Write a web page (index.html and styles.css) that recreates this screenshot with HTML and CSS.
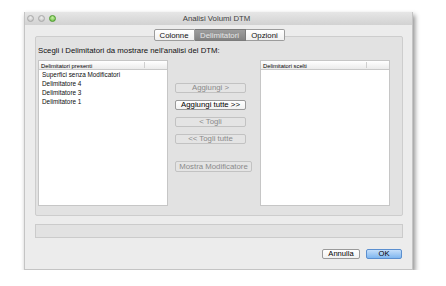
FILE: index.html
```html
<!DOCTYPE html>
<html lang="it">
<head>
    <meta charset="UTF-8">
    <meta name="viewport" content="width=device-width, initial-scale=1.0">
    <title>Analisi Volumi DTM</title>
    <link rel="stylesheet" href="styles.css">
</head>
<body>
    <div class="window">
        <div class="titlebar">
            <div class="lights">
                <span class="light"></span>
                <span class="light"></span>
                <span class="light green"></span>
            </div>
            <div class="title">Analisi Volumi DTM</div>
        </div>

        <div class="content">
            <div class="tabs">
                <span class="tab first">Colonne</span>
                <span class="tab selected">Delimitatori</span>
                <span class="tab last">Opzioni</span>
            </div>

            <div class="tab-box">
                <div class="label">Scegli i Delimitatori da mostrare nell'analisi del DTM:</div>

                <div class="pickers">
                    <div class="list">
                        <div class="list-header"><span class="col-main">Delimitatori presenti</span><span class="col-rest"></span></div>
                        <div class="list-item">Superfici senza Modificatori</div>
                        <div class="list-item">Delimitatore 4</div>
                        <div class="list-item">Delimitatore 3</div>
                        <div class="list-item">Delimitatore 1</div>
                    </div>

                    <div class="actions">
                        <button class="btn disabled">Aggiungi &gt;</button>
                        <button class="btn">Aggiungi tutte &gt;&gt;</button>
                        <button class="btn disabled">&lt; Togli</button>
                        <button class="btn disabled">&lt;&lt; Togli tutte</button>
                        <button class="btn disabled wide">Mostra Modificatore</button>
                    </div>

                    <div class="list">
                        <div class="list-header"><span class="col-main">Delimitatori scelti</span><span class="col-rest"></span></div>
                    </div>
                </div>
            </div>

            <div class="progress"></div>

            <div class="footer">
                <button class="btn-footer">Annulla</button>
                <button class="btn-footer default">OK</button>
            </div>
        </div>
    </div>
</body>
</html>
```

FILE: styles.css
```css
body {
    margin: 0;
    background: #ffffff;
    font-family: 'Liberation Sans', Arial, sans-serif;
    font-size: 7.8px;
    color: #000000;
}

.window {
    margin: 12px 0 0 24px;
    width: 389px;
    height: 258px;
    box-sizing: border-box;
    background: #ececec;
    border: 1px solid #c4c4c4;
    border-top: none;
    box-shadow: 2px 3px 5px rgba(0, 0, 0, 0.45);
}

.titlebar {
    position: relative;
    height: 13px;
    background: linear-gradient(#e6e6e6, #d2d2d2);
    display: flex;
    align-items: center;
}

.lights {
    display: flex;
    gap: 4px;
    padding-left: 2px;
}

.light {
    width: 7px;
    height: 7px;
    border-radius: 50%;
    box-sizing: border-box;
    background: radial-gradient(circle at 50% 35%, #eeeeee, #bdbdbd);
    border: 1px solid #a9a9a9;
}

.light.green {
    background: radial-gradient(circle at 50% 35%, #c8f0a4, #5fb83a);
    border-color: #4c9a2c;
}

.title {
    position: absolute;
    left: 0;
    right: 0;
    top: 0;
    line-height: 13px;
    text-align: center;
    color: #3f3f3f;
    padding-right: 4px;
}

.content {
    padding: 0 9px 0 10px;
}

.tabs {
    display: flex;
    justify-content: center;
    margin-top: 4px;
    margin-bottom: -5px;
    position: relative;
    z-index: 1;
}

.tab {
    height: 12px;
    line-height: 11px;
    box-sizing: border-box;
    padding: 0 5px;
    background: linear-gradient(#ffffff, #f0f0f0);
    border: 1px solid #9c9c9c;
    border-left: none;
    color: #111111;
}

.tab.first {
    border-left: 1px solid #9c9c9c;
    border-radius: 2px 0 0 2px;
    width: 41px;
    text-align: center;
}

.tab.selected {
    background: linear-gradient(#9d9d9d, #838383);
    color: #e6e6e6;
    border-color: #7b7b7b;
    width: 51px;
    text-align: center;
}

.tab.last {
    border-radius: 0 2px 2px 0;
    width: 39px;
    text-align: center;
}

.tab-box {
    height: 180px;
    box-sizing: border-box;
    background: #e2e2e2;
    border: 1px solid #cdcdcd;
    border-radius: 2px;
    padding: 9px 12px 0 2px;
}

.label {
    line-height: 10px;
    color: #111111;
}

.pickers {
    display: flex;
    margin-top: 4px;
}

.list {
    width: 130px;
    height: 146px;
    box-sizing: border-box;
    background: #ffffff;
    border: 1px solid #c6c6c6;
}

.list-header {
    display: flex;
    height: 9px;
    box-sizing: border-box;
    background: linear-gradient(#ffffff, #ebebeb);
    border-bottom: 1px solid #c9c9c9;
    font-size: 5.8px;
    line-height: 8px;
}

.col-main {
    width: 106px;
    padding-left: 2px;
    box-sizing: border-box;
    border-right: 1px solid #cfcfcf;
    margin: 1px 0;
}

.list-item {
    height: 9px;
    line-height: 9px;
    padding-left: 3px;
    font-size: 6.4px;
    color: #0d0d0d;
}

.actions {
    width: 77px;
    margin: 23px 8px 0 7px;
    display: flex;
    flex-direction: column;
    align-items: flex-start;
    gap: 7px;
}

.btn {
    width: 71px;
    height: 10px;
    padding: 0;
    box-sizing: border-box;
    font-family: inherit;
    font-size: 7.8px;
    line-height: 8px;
    background: linear-gradient(#ffffff, #f2f2f2);
    border: 1px solid #9a9a9a;
    border-radius: 2px;
    color: #000000;
}

.btn.disabled {
    background: #e4e4e4;
    border-color: #c2c2c2;
    color: #8a8a8a;
}

.btn.wide {
    width: 77px;
    height: 11px;
    margin-top: 10px;
}

.progress {
    margin-top: 8px;
    height: 14px;
    box-sizing: border-box;
    background: #e2e2e2;
    border: 1px solid #cbcbcb;
}

.footer {
    display: flex;
    justify-content: flex-end;
    gap: 6px;
    margin-top: 11px;
    padding-right: 1px;
}

.btn-footer {
    height: 10px;
    width: 38px;
    padding: 0;
    box-sizing: border-box;
    font-family: inherit;
    font-size: 7.6px;
    line-height: 8px;
    background: linear-gradient(#ffffff, #f1f1f1);
    border: 1px solid #9a9a9a;
    border-radius: 2px;
    color: #000000;
}

.btn-footer.default {
    width: 36px;
    background: linear-gradient(#c4defa, #7fb6ef);
    border-color: #5b8fcf;
}
```
